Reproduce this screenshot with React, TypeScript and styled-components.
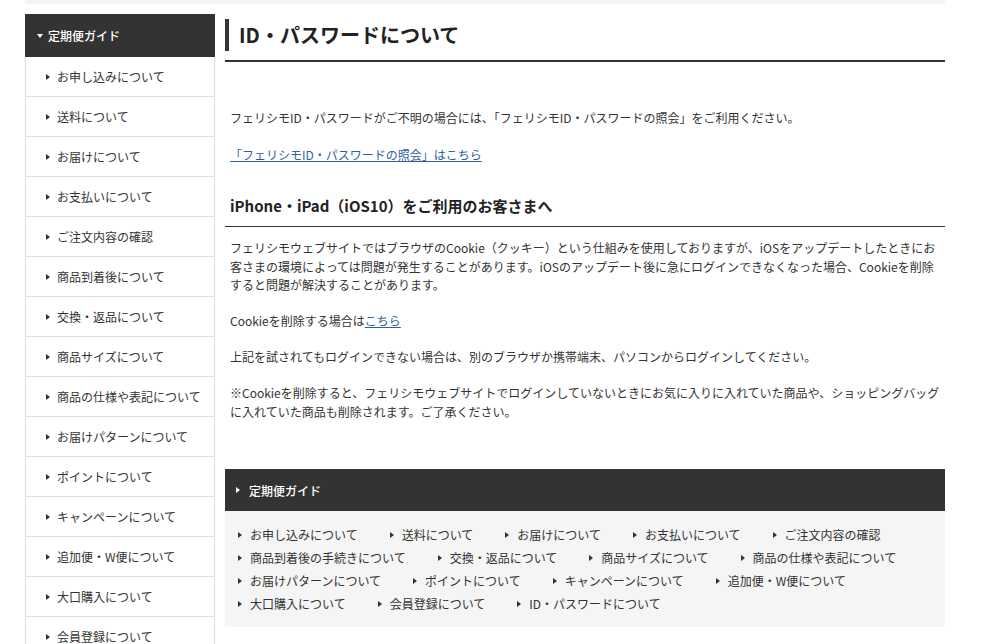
import React from "react";
import styled, { createGlobalStyle } from "styled-components";

const sideItems = [
  "お申し込みについて",
  "送料について",
  "お届けについて",
  "お支払いについて",
  "ご注文内容の確認",
  "商品到着後について",
  "交換・返品について",
  "商品サイズについて",
  "商品の仕様や表記について",
  "お届けパターンについて",
  "ポイントについて",
  "キャンペーンについて",
  "追加便・W便について",
  "大口購入について",
  "会員登録について",
  "ID・パスワードについて",
];

const footItems = [
  "お申し込みについて",
  "送料について",
  "お届けについて",
  "お支払いについて",
  "ご注文内容の確認",
  "商品到着後の手続きについて",
  "交換・返品について",
  "商品サイズについて",
  "商品の仕様や表記について",
  "お届けパターンについて",
  "ポイントについて",
  "キャンペーンについて",
  "追加便・W便について",
  "大口購入について",
  "会員登録について",
  "ID・パスワードについて",
];

export default function App() {
  return (
    <>
      <GlobalStyle />
      <Page>
        <TopBar />
        <Columns>
          <Sidebar>
            <SideHead>定期便ガイド</SideHead>
            {sideItems.map((t) => (
              <SideItem key={t}>{t}</SideItem>
            ))}
          </Sidebar>
          <Main>
            <TitleWrap>
              <Title>ID・パスワードについて</Title>
            </TitleWrap>
            <Intro>
              フェリシモID・パスワードがご不明の場合には、「フェリシモID・パスワードの照会」をご利用ください。
            </Intro>
            <LinkLine>
              <TextLink href="#">「フェリシモID・パスワードの照会」はこちら</TextLink>
            </LinkLine>
            <SubTitle>iPhone・iPad（iOS10）をご利用のお客さまへ</SubTitle>
            <Body>
              <p>
                フェリシモウェブサイトではブラウザのCookie（クッキー）という仕組みを使用しておりますが、iOSをアップデートしたときにお客さまの環境によっては問題が発生することがあります。iOSのアップデート後に急にログインできなくなった場合、Cookieを削除すると問題が解決することがあります。
              </p>
              <p>
                Cookieを削除する場合は<TextLink href="#">こちら</TextLink>
              </p>
              <p>上記を試されてもログインできない場合は、別のブラウザか携帯端末、パソコンからログインしてください。</p>
              <p>
                ※Cookieを削除すると、フェリシモウェブサイトでログインしていないときにお気に入りに入れていた商品や、ショッピングバッグに入れていた商品も削除されます。ご了承ください。
              </p>
            </Body>
            <Guide>
              <GuideHead>定期便ガイド</GuideHead>
              <GuideList>
                {footItems.map((t) => (
                  <GuideItem key={t}>{t}</GuideItem>
                ))}
              </GuideList>
            </Guide>
          </Main>
        </Columns>
      </Page>
    </>
  );
}

const GlobalStyle = createGlobalStyle`
  body {
    margin: 0;
    background: #fff;
    color: #333;
    font-family: "Noto Sans CJK JP", "Noto Sans", sans-serif;
    font-size: 12px;
  }
  p {
    margin: 0;
  }
`;

const Page = styled.div`
  width: 920px;
  margin-left: 25px;
`;

const TopBar = styled.div`
  height: 4px;
  background-color: #f4f4f4;
`;

const Columns = styled.div`
  display: flex;
  align-items: flex-start;
  gap: 10px;
`;

const Sidebar = styled.nav`
  width: 190px;
  margin-top: 10px;
  flex-shrink: 0;
`;

const SideHead = styled.div`
  display: flex;
  align-items: center;
  height: 43px;
  padding-left: 12px;
  background-color: #333;
  color: #fff;
  font-weight: 500;
  &::before {
    content: "";
    border-left: 3px solid transparent;
    border-right: 3px solid transparent;
    border-top: 4px solid #fff;
    margin-right: 5px;
  }
`;

const SideItem = styled.div`
  display: flex;
  align-items: center;
  height: 39px;
  padding-left: 20px;
  border: 1px solid #ddd;
  border-top: none;
  color: #333;
  &::before {
    content: "";
    border-top: 3.5px solid transparent;
    border-bottom: 3.5px solid transparent;
    border-left: 4px solid #333;
    margin-right: 7px;
  }
`;

const Main = styled.main`
  width: 720px;
  margin-top: 15px;
`;

const TitleWrap = styled.div`
  padding-bottom: 9px;
  border-bottom: 2px solid #333;
`;

const Title = styled.h1`
  margin: 0;
  border-left: 4px solid #333;
  padding-left: 10px;
  font-size: 20px;
  line-height: 32px;
  font-weight: 700;
  color: #222;
`;

const Intro = styled.p`
  margin-top: 47px !important;
  padding-left: 5px;
  line-height: 18px;
`;

const LinkLine = styled.p`
  margin-top: 19px !important;
  padding-left: 5px;
  line-height: 18px;
`;

const TextLink = styled.a`
  color: #2f5f9e;
  text-decoration: underline;
`;

const SubTitle = styled.h2`
  margin: 31px 0 0;
  padding: 0 0 9px 5px;
  border-bottom: 1px solid #333;
  font-size: 15px;
  line-height: 22px;
  font-weight: 700;
  color: #222;
`;

const Body = styled.div`
  margin-top: 12px;
  padding: 0 5px;
  line-height: 18.5px;
  p + p {
    margin-top: 17.5px;
  }
`;

const Guide = styled.section`
  margin-top: 48px;
`;

const GuideHead = styled.div`
  display: flex;
  align-items: center;
  height: 42px;
  padding-left: 11px;
  background-color: #333;
  color: #fff;
  font-weight: 500;
  &::before {
    content: "";
    border-top: 3px solid transparent;
    border-bottom: 3px solid transparent;
    border-left: 4px solid #fff;
    margin-right: 9px;
  }
`;

const GuideList = styled.div`
  display: flex;
  flex-wrap: wrap;
  column-gap: 32px;
  padding: 12px 13px 12px;
  background-color: #f5f5f5;
`;

const GuideItem = styled.a`
  display: flex;
  align-items: center;
  line-height: 23px;
  color: #333;
  cursor: pointer;
  &::before {
    content: "";
    border-top: 3.5px solid transparent;
    border-bottom: 3.5px solid transparent;
    border-left: 4px solid #333;
    margin-right: 8px;
  }
`;
